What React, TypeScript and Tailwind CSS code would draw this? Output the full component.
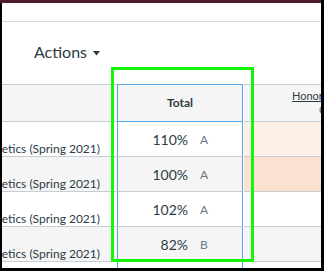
const rows = [
  { pct: "110%", grade: "A", stripe: false, honors: "bg-[#fdf0e6]" },
  { pct: "100%", grade: "A", stripe: true, honors: "bg-[#fbe2d0]" },
  { pct: "102%", grade: "A", stripe: false, honors: "" },
  { pct: "82%", grade: "B", stripe: true, honors: "" },
  { pct: "", grade: "", stripe: false, honors: "" },
];

function Caret() {
  return (
    <svg width="7" height="5" viewBox="0 0 7 5" className="ml-[6px] mt-[3px]">
      <path d="M0 0h7L3.5 4.5z" fill="#2d3b45" />
    </svg>
  );
}

export default function App() {
  return (
    <div className="w-[324px] h-[271px] bg-black pr-[3px] pb-[3px] flex flex-col font-['Lato',sans-serif] text-[#2d3b45]">
      <div className="h-[3px] bg-[#4e1d2b] shrink-0" />
      <div className="relative flex-1 ml-[2px] bg-white overflow-hidden flex flex-col">
        <div className="h-[18px] shrink-0" />
        <div className="h-px bg-[#d5d9dc] shrink-0" />
        <div className="h-[62px] shrink-0 pl-[32px] pt-[20px] flex items-start">
          <span className="text-[16px] leading-[20px]">Actions</span>
          <span className="h-[20px] flex items-center">
            <Caret />
          </span>
        </div>

        {/* header row */}
        <div className="flex h-[38px] shrink-0">
          <div className="w-[115px] shrink-0 bg-[#f5f5f5] border-y border-[#c7cdd1]" />
          <div className="w-[126px] shrink-0 bg-[#f5f5f5] border border-[#5aa5e4] flex items-center justify-center">
            <span className="text-[12px] font-bold">Total</span>
          </div>
          <div className="w-[78px] shrink-0 ml-px bg-[#f5f5f5] border-y border-[#c7cdd1] flex flex-col justify-center whitespace-nowrap text-[11px] leading-[14px]">
            <span className="pl-[48px] underline">Honors Assignment</span>
            <span className="pl-[75px] text-[#5b6770]">Out of 100</span>
          </div>
        </div>

        {rows.map((r, i) => (
          <div key={i} className="flex h-[35px] shrink-0">
            <div
              className={`w-[115px] shrink-0 border-b border-[#c7cdd1] overflow-hidden flex justify-end items-end pr-[17px] ${r.stripe ? "bg-[#f5f5f5]" : "bg-white"}`}
            >
              {r.pct && (
                <span className="shrink-0 whitespace-nowrap text-[12px] leading-[14px]">
                  Intro to Genetics (Spring 2021)
                </span>
              )}
            </div>
            <div
              className={`w-[126px] shrink-0 border-x border-x-[#5aa5e4] border-b border-b-[#c7cdd1] flex items-center ${r.stripe ? "bg-[#f5f5f5]" : "bg-white"}`}
            >
              <span className="w-[70px] text-right text-[14px] leading-[18px] pt-[2px]">{r.pct}</span>
              <span className="ml-[12px] text-[12px] leading-[18px] pt-[2px] text-[#6a7883]">{r.grade}</span>
            </div>
            <div
              className={`w-[78px] shrink-0 ml-px border-b border-[#c7cdd1] ${r.honors || (r.stripe ? "bg-[#f5f5f5]" : "bg-white")}`}
            />
          </div>
        ))}

        <div className="absolute left-[109px] top-[64px] w-[143px] h-[195px] border-[3px] border-[#14f50a] pointer-events-none" />
      </div>
    </div>
  );
}
